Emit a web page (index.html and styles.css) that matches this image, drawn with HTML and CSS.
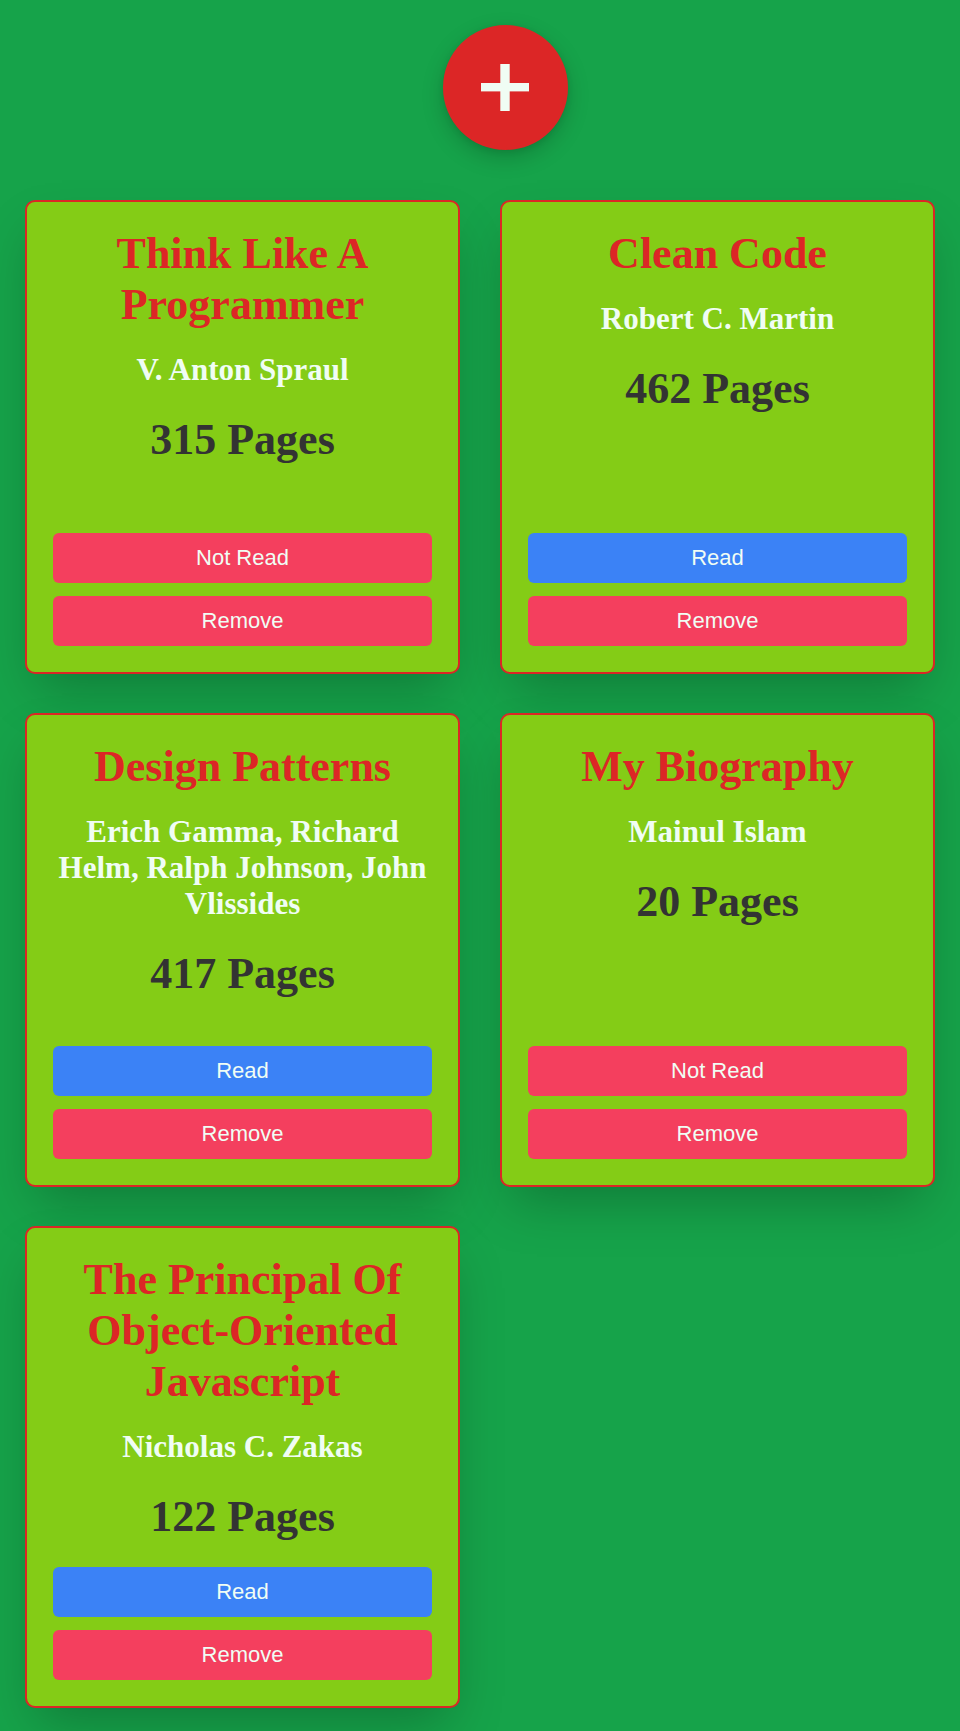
FILE: index.html
```html
<!DOCTYPE html>
<html lang="en">
<head>
<meta charset="utf-8">
<title>Library</title>
<link rel="stylesheet" href="styles.css">
</head>
<body class="page">
  <header class="top">
    <button class="add-btn" type="button" aria-label="Add book">
      <svg class="add-icon" width="48" height="48" viewBox="0 0 48 48" aria-hidden="true">
        <rect x="19.3" y="0" width="9.4" height="47" fill="#f0fdf4"/>
        <rect x="0" y="19" width="48" height="8.4" fill="#f0fdf4"/>
      </svg>
    </button>
  </header>

  <main class="library">
    <article class="card">
      <h2 class="title">Think Like A Programmer</h2>
      <p class="author">V. Anton Spraul</p>
      <p class="pages">315 Pages</p>
      <div class="actions">
        <button class="btn btn-red" type="button">Not Read</button>
        <button class="btn btn-red" type="button">Remove</button>
      </div>
    </article>

    <article class="card">
      <h2 class="title">Clean Code</h2>
      <p class="author">Robert C. Martin</p>
      <p class="pages">462 Pages</p>
      <div class="actions">
        <button class="btn btn-blue" type="button">Read</button>
        <button class="btn btn-red" type="button">Remove</button>
      </div>
    </article>

    <article class="card">
      <h2 class="title">Design Patterns</h2>
      <p class="author">Erich Gamma, Richard Helm, Ralph Johnson, John Vlissides</p>
      <p class="pages">417 Pages</p>
      <div class="actions">
        <button class="btn btn-blue" type="button">Read</button>
        <button class="btn btn-red" type="button">Remove</button>
      </div>
    </article>

    <article class="card">
      <h2 class="title">My Biography</h2>
      <p class="author">Mainul Islam</p>
      <p class="pages">20 Pages</p>
      <div class="actions">
        <button class="btn btn-red" type="button">Not Read</button>
        <button class="btn btn-red" type="button">Remove</button>
      </div>
    </article>

    <article class="card">
      <h2 class="title">The Principal Of Object-Oriented Javascript</h2>
      <p class="author">Nicholas C. Zakas</p>
      <p class="pages">122 Pages</p>
      <div class="actions">
        <button class="btn btn-blue" type="button">Read</button>
        <button class="btn btn-red" type="button">Remove</button>
      </div>
    </article>
  </main>
</body>
</html>
```

FILE: styles.css
```css
* {
  box-sizing: border-box;
}

html, body {
  margin: 0;
  padding: 0;
}

html {
  background: #16a34a;
}

.page {
  background: #16a34a;
  font-family: "Liberation Serif", "Times New Roman", serif;
  padding: 25px 25px 25px 25px;
}

.top {
  display: flex;
  justify-content: center;
  margin-bottom: 50px;
}

.add-btn {
  width: 125px;
  height: 125px;
  border-radius: 50%;
  border: none;
  background: #dc2626;
  margin-left: 50px;
  padding: 0;
  display: flex;
  align-items: center;
  justify-content: center;
  box-shadow: 0 8px 22px rgba(0, 0, 0, 0.18), 0 2px 6px rgba(0, 0, 0, 0.08);
  cursor: pointer;
}

.add-icon {
  display: block;
  margin-top: 1px;
}

.library {
  display: grid;
  grid-template-columns: 1fr 1fr;
  column-gap: 40px;
  row-gap: 39px;
}

.card {
  display: flex;
  flex-direction: column;
  min-height: 474px;
  background: #84cc16;
  border: 2px solid #dc2626;
  border-radius: 10px;
  padding: 26px 26px 26px 26px;
  box-shadow: 0 25px 50px -12px rgba(0, 0, 0, 0.25);
  text-align: center;
}

.title {
  margin: 0;
  font-size: 44px;
  line-height: normal;
  font-weight: 700;
  color: #dc2626;
}

.author {
  margin: 22px 0 0 0;
  font-size: 31px;
  line-height: normal;
  font-weight: 700;
  color: #f0fdf4;
}

.pages {
  margin: 26px 0 0 0;
  font-size: 44px;
  line-height: normal;
  font-weight: 700;
  color: #333333;
}

.actions {
  margin-top: auto;
  padding-top: 25px;
  display: flex;
  flex-direction: column;
  gap: 13px;
}

.btn {
  display: block;
  width: 100%;
  height: 50px;
  border: none;
  border-radius: 6px;
  font-family: "Liberation Sans", Arial, sans-serif;
  font-size: 22px;
  color: #f0fdf4;
  cursor: pointer;
  padding: 0;
}

.btn-red {
  background: #f43f5e;
}

.btn-blue {
  background: #3b82f6;
}
```
